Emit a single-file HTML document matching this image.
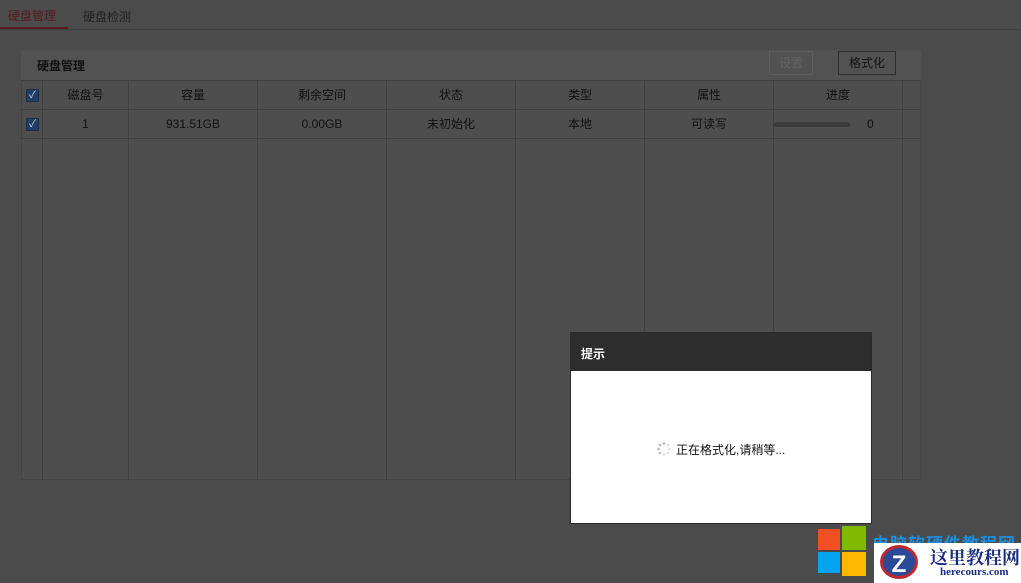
<!DOCTYPE html>
<html><head><meta charset="utf-8"><style>
*{margin:0;padding:0;box-sizing:border-box}
body{width:1021px;height:583px;background:#4b4b4b;font-family:"Liberation Sans","Noto Sans CJK SC",sans-serif;font-size:12px;color:#111;position:relative;overflow:hidden}
.abs{position:absolute}
.tabs{left:0;top:0;width:1021px;height:30px;border-bottom:1px solid #3e3e3e}
.t1{left:8px;top:7px;color:#5a1a1e;font-size:12px}
.t1u{left:0;top:27px;width:68px;height:2px;background:#5a1a1e}
.t2{left:83px;top:8px;color:#222}
.panel{left:21px;top:50px;width:900px;height:430px;background:#4e4e4e;border:1px solid #444}
.bar{left:21px;top:50px;width:900px;height:30px;background:#525252}
.title{left:37px;top:57px;font-size:12px;color:#111;font-weight:bold}
.btn{height:24px;border:1px solid #2e2e2e;text-align:center;line-height:22px;font-size:12px}
.vl{width:1px;background:#404040;top:80px;height:400px}
.hl{height:1px;background:#404040;left:21px;width:900px}
.cell{text-align:center;top:0;line-height:29px}
.cb{width:13px;height:13px;background:#1f3f66;border:1px solid #1a2f4d;color:#cfd8e4;font-size:10px;line-height:11px;text-align:center}
.dlg{left:570px;top:332px;width:302px;height:192px;background:#fff;border:1px solid #2a2a2a}
.dh{left:0;top:0;width:100%;height:38px;background:#2d2d2d;color:#fff;font-weight:bold;font-size:12px;padding:12px 10px}
</style></head><body>
<div class="abs tabs"></div>
<div class="abs t1">硬盘管理</div><div class="abs t1u"></div>
<div class="abs t2">硬盘检测</div>
<div class="abs panel"></div>
<div class="abs bar"></div>
<div class="abs title">硬盘管理</div>
<div class="abs btn" style="left:769px;top:51px;width:44px;color:#636363;border-color:#5e5e5e">设置</div>
<div class="abs btn" style="left:838px;top:51px;width:58px;">格式化</div>
<div class="abs hl" style="top:80px"></div>
<div class="abs hl" style="top:109px"></div>
<div class="abs hl" style="top:138px"></div>
<div class="abs vl" style="left:42px"></div>
<div class="abs vl" style="left:128px"></div>
<div class="abs vl" style="left:257px"></div>
<div class="abs vl" style="left:386px"></div>
<div class="abs vl" style="left:515px"></div>
<div class="abs vl" style="left:644px"></div>
<div class="abs vl" style="left:773px"></div>
<div class="abs vl" style="left:902px"></div>
<div class="abs cb" style="left:26px;top:89px">✓</div>
<div class="abs cb" style="left:26px;top:118px">✓</div>
<div class="abs" style="top:81px;left:0;width:1021px;height:28px">
<div class="abs cell" style="left:43px;width:85px">磁盘号</div>
<div class="abs cell" style="left:129px;width:128px">容量</div>
<div class="abs cell" style="left:258px;width:128px">剩余空间</div>
<div class="abs cell" style="left:387px;width:128px">状态</div>
<div class="abs cell" style="left:516px;width:128px">类型</div>
<div class="abs cell" style="left:645px;width:128px">属性</div>
<div class="abs cell" style="left:774px;width:128px">进度</div>
</div>
<div class="abs" style="top:110px;left:0;width:1021px;height:28px">
<div class="abs cell" style="left:43px;width:85px">1</div>
<div class="abs cell" style="left:129px;width:128px">931.51GB</div>
<div class="abs cell" style="left:258px;width:128px">0.00GB</div>
<div class="abs cell" style="left:387px;width:128px">未初始化</div>
<div class="abs cell" style="left:516px;width:128px">本地</div>
<div class="abs cell" style="left:645px;width:128px">可读写</div>
<div class="abs" style="left:774px;top:12px;width:76px;height:5px;border-radius:3px;background:#3a3a3a"></div>
<div class="abs" style="left:867px;top:0;line-height:29px">0</div>
</div>
<div class="abs dlg">
<div class="abs dh">提示</div>
<svg class="abs" style="left:86px;top:109px" width="14" height="14" viewBox="0 0 14 14">
<g fill="#aab8cc"><circle cx="7" cy="1.5" r="1.3"/><circle cx="11" cy="3" r="1.1" opacity=".6"/><circle cx="12.5" cy="7" r="1.1" opacity=".5"/><circle cx="11" cy="11" r="1.1" opacity=".5"/><circle cx="7" cy="12.5" r="1.1" opacity=".6"/><circle cx="3" cy="11" r="1.2"/><circle cx="1.5" cy="7" r="1.3"/><circle cx="3" cy="3" r="1.3"/></g></svg>
<div class="abs" style="left:105px;top:108px;font-size:12px;color:#111">正在格式化,请稍等...</div>
</div>
<div class="abs" style="left:818px;top:529px;width:22px;height:21px;background:#f25022"></div>
<div class="abs" style="left:842px;top:526px;width:24px;height:24px;background:#7fba00"></div>
<div class="abs" style="left:818px;top:552px;width:22px;height:21px;background:#00a4ef"></div>
<div class="abs" style="left:842px;top:552px;width:24px;height:24px;background:#ffb900"></div>
<div class="abs" style="left:872px;top:530px;color:#1b8fe0;font-weight:bold;font-size:17px;letter-spacing:1px">电脑软硬件教程网</div>
<div class="abs" style="left:874px;top:543px;width:147px;height:40px;background:#fff"></div>
<div class="abs" style="left:880px;top:545px;width:38px;height:34px;border-radius:50%;background:#2c4a9a;color:#fff;font-weight:bold;font-size:24px;text-align:center;line-height:34px;border:3px solid #c0282d">Z</div>
<div class="abs" style="left:930px;top:544px;color:#1a2d80;font-weight:bold;font-size:18px;font-family:'Noto Serif CJK SC',serif">这里教程网</div>
<div class="abs" style="left:940px;top:566px;color:#1a2d80;font-weight:bold;font-size:11px;font-family:'Liberation Serif',serif">herecours.com</div>
</body></html>
